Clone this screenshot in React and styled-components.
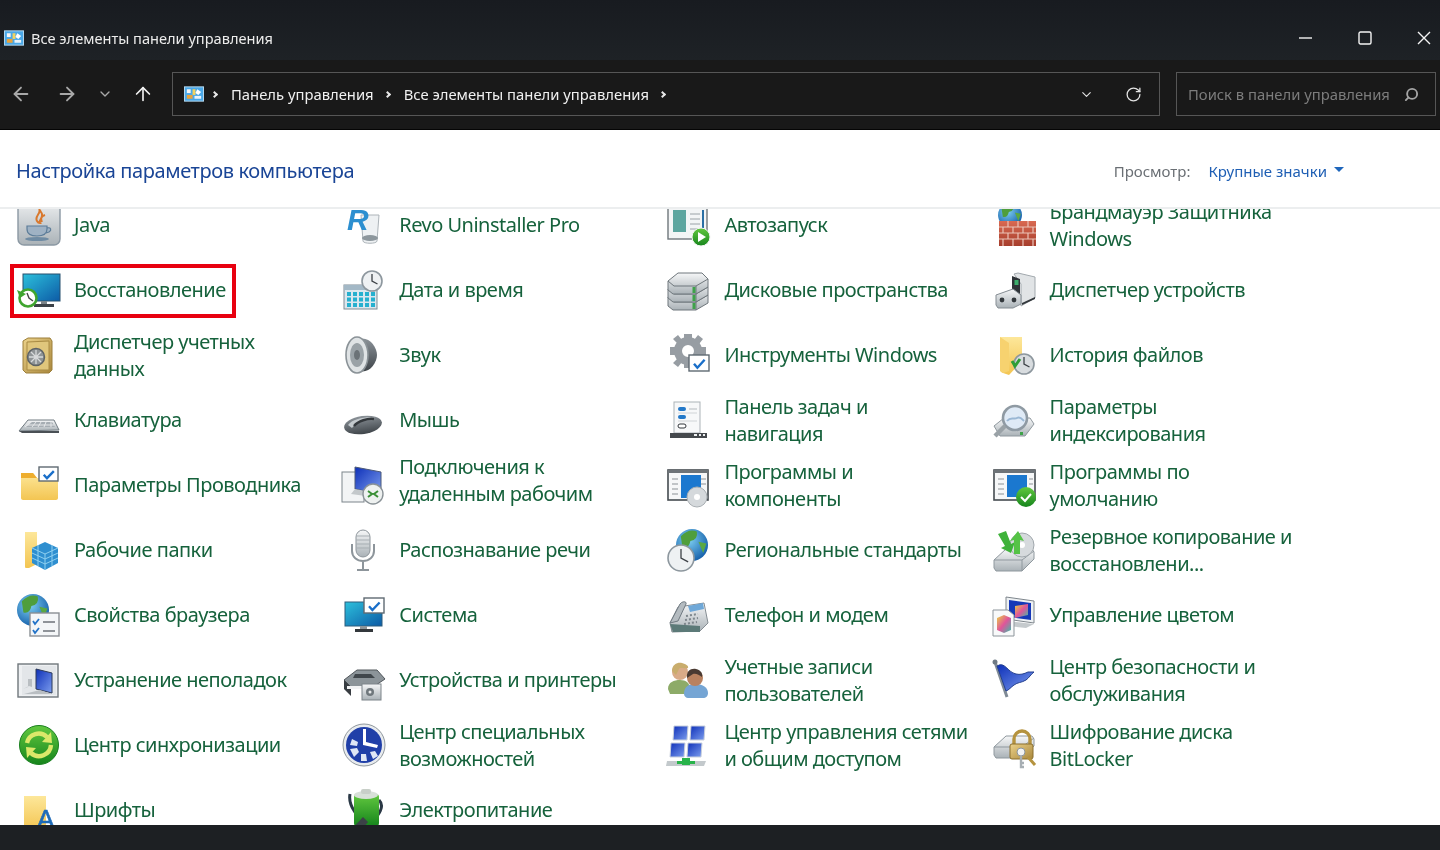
import React from "react";
import styled, { createGlobalStyle } from "styled-components";
import { ArrowLeft, ArrowRight, ArrowUp, ChevronDown, RotateCw, Search } from "lucide-react";

const GlobalStyle = createGlobalStyle`
  html, body { margin: 0; padding: 0; background: #fff; }
  body { font-family: "Noto Sans", "Open Sans", sans-serif; }
`;

// small drawing helpers shared by the big icons
const Gradients = () => (
  <HiddenSvg aria-hidden="true">
    <defs>
      <linearGradient id="gScreen" x1="0" y1="0" x2="1" y2="1"><stop offset="0" stopColor="#2cc0dc" /><stop offset="1" stopColor="#0d5ba6" /></linearGradient>
      <linearGradient id="gFolder" x1="0" y1="0" x2="0" y2="1"><stop offset="0" stopColor="#fde79a" /><stop offset="1" stopColor="#f3c552" /></linearGradient>
      <linearGradient id="gSteel" x1="0" y1="0" x2="0" y2="1"><stop offset="0" stopColor="#f6f7f8" /><stop offset="1" stopColor="#aab2b7" /></linearGradient>
      <linearGradient id="gDark" x1="0" y1="0" x2="0" y2="1"><stop offset="0" stopColor="#8b9298" /><stop offset="1" stopColor="#3f454a" /></linearGradient>
      <linearGradient id="gGreen" x1="0" y1="0" x2="0" y2="1"><stop offset="0" stopColor="#62c83f" /><stop offset="1" stopColor="#16851c" /></linearGradient>
      <radialGradient id="gGlobe" cx="0.4" cy="0.35" r="0.75"><stop offset="0" stopColor="#7fd0f2" /><stop offset="1" stopColor="#0b55a4" /></radialGradient>
      <linearGradient id="gWin" x1="0" y1="0" x2="1" y2="1"><stop offset="0" stopColor="#0d2fb8" /><stop offset="1" stopColor="#7c9dee" /></linearGradient>
      <linearGradient id="gGold" x1="0" y1="0" x2="1" y2="1"><stop offset="0" stopColor="#ecd28a" /><stop offset="1" stopColor="#a9873c" /></linearGradient>
      <linearGradient id="gBrick" x1="0" y1="0" x2="0" y2="1"><stop offset="0" stopColor="#d96a52" /><stop offset="1" stopColor="#a63d2c" /></linearGradient>
      <linearGradient id="gRainbow" x1="0" y1="0" x2="1" y2="1"><stop offset="0" stopColor="#e9d23f" /><stop offset="0.5" stopColor="#e0549a" /><stop offset="1" stopColor="#36c0a8" /></linearGradient>
    </defs>
  </HiddenSvg>
);

const CheckCard = ({ x, y, w = 20, h = 15 }) => (
  <g>
    <rect x={x} y={y} width={w} height={h} fill="#fff" stroke="#5f6a72" strokeWidth="1.4" />
    <path d={`M${x + w * 0.25} ${y + h * 0.55}l${w * 0.17} ${h * 0.25} ${w * 0.36} -${h * 0.5}`} fill="none" stroke="#1a6fc9" strokeWidth="2.4" />
  </g>
);

const Globe = ({ cx, cy, r }) => (
  <g>
    <circle cx={cx} cy={cy} r={r} fill="url(#gGlobe)" />
    <path d={`M${cx - r * 0.7} ${cy - r * 0.55}q${r * 0.5} -${r * 0.5} ${r} -${r * 0.3}q${r * 0.1} ${r * 0.5} -${r * 0.4} ${r * 0.6}q-${r * 0.1} ${r * 0.5} -${r * 0.5} ${r * 0.4}z`} fill="#4f9e3c" />
    <path d={`M${cx + r * 0.4} ${cy - r * 0.2}l${r * 0.5} ${r * 0.1}l-${r * 0.2} ${r * 0.6}z`} fill="#5aa843" />
  </g>
);

const Clock = ({ cx, cy, r, fill = "#eef1f3" }) => (
  <g>
    <circle cx={cx} cy={cy} r={r} fill={fill} stroke="#8d979e" strokeWidth="1.6" />
    <path d={`M${cx} ${cy - r * 0.7}V${cy}L${cx + r * 0.55} ${cy + r * 0.3}`} fill="none" stroke="#3d4247" strokeWidth="1.3" />
  </g>
);

const Drive = ({ y = 0 }) => (
  <g transform={`translate(0 ${y})`}>
    <path d="M4 31 16 20h26l2 3v7L32 42H6l-2-3z" fill="url(#gSteel)" stroke="#8f989e" />
    <path d="M4 31h28l12-9M32 31v11" fill="none" stroke="#8f989e" />
  </g>
);

const Java = () => (<>
  <rect x="4" y="-6" width="42" height="50" rx="6" fill="url(#gSteel)" stroke="#8b98a3" strokeWidth="1.4" />
  <path d="M25 8c3 4-5 7-2 12 1 2 3 2 3 2-2-3 5-6 1-11zM31 14c-3 1-5 3-3 7" fill="none" stroke="#d9782d" strokeWidth="2" />
  <path d="M13 25h20v3c0 5-4 7-10 7s-10-2-10-7zM33 27c4-1 5 2 2 4l-3 1" fill="#9fb2c4" stroke="#5d7d99" strokeWidth="1.2" />
  <ellipse cx="23" cy="38" rx="12" ry="2" fill="#6f8ba3" />
</>);

const Restore = () => (<>
  <rect x="9" y="8" width="37" height="27" fill="url(#gScreen)" stroke="#27506f" />
  <path d="M20 38h20v3H20z" fill="#3c4247" /><path d="M27 35h6v3h-6z" fill="#7b8489" />
  <circle cx="14" cy="32" r="8.5" fill="#fff" stroke="#3fa52f" strokeWidth="2.6" />
  <path d="M3 24l3 8 6-4z" fill="#3fa52f" /><path d="M13 27l2 5 4 3" fill="none" stroke="#444" strokeWidth="1.4" />
</>);

const Safe = () => (<>
  <path d="M9 10l5-3h22l2 3v29l-3 3H12l-3-3z" fill="url(#gGold)" stroke="#9c7f3a" />
  <path d="M13 11l22-1v29l-22 0z" fill="#e0c67c" stroke="#a98b44" />
  <circle cx="22" cy="26" r="8.5" fill="#8f9496" stroke="#5d6265" strokeWidth="1.5" />
  <path d="M22 19v14M15 26h14M17 21l10 10M27 21 17 31" stroke="#d8dadb" strokeWidth="1.3" />
</>);

const Keyboard = () => (<>
  <path d="M5 35 14 24h26l5 10z" fill="url(#gSteel)" stroke="#707a81" />
  <path d="M12 31 18 26h20l3 5z" fill="#a6adb3" />
  <path d="M17 26l-6 5M22 26l-4 5M27 26l-3 5M32 26l-2 5M37 26v5M12 29h28" stroke="#e6e8ea" />
  <path d="M5 35h40v2H8z" fill="#4a5055" />
</>);

const Explorer = () => (<>
  <path d="M7 14c0-1 1-2 2-2h10l4 5h21v20c0 1-1 2-2 2H9c-1 0-2-1-2-2z" fill="url(#gFolder)" />
  <path d="M7 12h12l4 5H7z" fill="#eeae2e" />
  <CheckCard x={25} y={6} w={19} h={14} />
</>);

const WorkFolders = () => (<>
  <path d="M11 6h12v32l-8 4h-3c-1 0-1-1-1-2z" fill="url(#gFolder)" />
  <path d="M18 22l13-6 13 6v15l-13 7-13-7z" fill="#2f8fd0" />
  <path d="M18 22l13 6 13-6M31 28v16M18 27l13 6 13-6M18 32l13 6 13-6M24 19v21M38 19v21" fill="none" stroke="#8fd0f0" />
</>);

const Browser = () => (<>
  <Globe cx={19} cy={19} r={16} />
  <rect x="16" y="22" width="29" height="23" fill="#f4f6f8" stroke="#8a8f94" strokeWidth="1.4" />
  <path d="M19 30l2 3 4-5M19 39l2 3 4-5" fill="none" stroke="#2373c8" strokeWidth="1.8" />
  <path d="M29 31h12M29 40h12" stroke="#6d7379" strokeWidth="1.6" />
</>);

const Trouble = () => (<>
  <rect x="4" y="8" width="40" height="33" fill="#eef0f2" stroke="#70777c" strokeWidth="1.4" />
  <path d="M8 10h34v29H8z" fill="#e3e6e9" />
  <path d="M22 13 38 17v20l-16-4z" fill="url(#gWin)" stroke="#2d3a58" />
  <path d="M9 33l6-3 3 1v-8h-4v8M10 38l16-4 12 4z" fill="#b9bec2" />
</>);

const Sync = () => (<>
  <circle cx="25" cy="24" r="19.5" fill="url(#gGreen)" stroke="#19801f" />
  <path d="M13 22a12 12 0 0 1 20-6" fill="none" stroke="#dbe86a" strokeWidth="4.4" />
  <path d="M37 24a12 12 0 0 1-20 8" fill="none" stroke="#dbe86a" strokeWidth="4.4" />
  <path d="M28 21 38 22 37 11zM22 27 12 26 13 37z" fill="#dbe86a" />
</>);

const Fonts = () => (<>
  <path d="M10 10h22v34H10z" fill="url(#gFolder)" />
  <text x="23" y="42" fontFamily="Liberation Sans, sans-serif" fontSize="26" fill="#1e6bb8" stroke="#1e6bb8" strokeWidth=".6">A</text>
</>);

const Revo = () => (<>
  <path d="M22 14h18l-2 26c0 3-14 3-14 0z" fill="#eef1f3" stroke="#adb4b9" />
  <ellipse cx="31" cy="37" rx="8" ry="3" fill="#8d979d" />
  <text x="8" y="29" fontFamily="Liberation Sans, sans-serif" fontSize="30" fontWeight="700" fontStyle="italic" fill="#2c8fd0">R</text>
</>);

const DateTime = () => (<>
  <rect x="5" y="19" width="33" height="24" fill="#dbe7ee" stroke="#7e8c95" />
  <path d="M5 19h33v5H5z" fill="#a3b8c6" />
  {[0, 1, 2].map(r => [0, 1, 2, 3, 4].map(c => <rect key={`${r}${c}`} x={8 + c * 6} y={26 + r * 5.5} width="4" height="4" fill="#26b0cf" />))}
  <Clock cx={33} cy={15} r={10} />
</>);

const Sound = () => (<>
  <path d="M20 8c10-3 18 8 18 16s-8 19-18 16z" fill="url(#gDark)" />
  <ellipse cx="18" cy="24" rx="11" ry="18" fill="#dfe3e5" stroke="#8a9297" strokeWidth="1.6" />
  <ellipse cx="18" cy="24" rx="7" ry="12" fill="#9aa2a7" />
  <ellipse cx="18" cy="24" rx="3" ry="5" fill="#6b7277" />
</>);

const Mouse = () => (<>
  <ellipse cx="24" cy="29" rx="19" ry="9" transform="rotate(-8 24 29)" fill="url(#gDark)" />
  <path d="M9 29c5-7 20-9 30-7-8-1-20 2-26 10z" fill="#c2c8cc" />
  <path d="M15 30c4-5 14-8 20-7" fill="none" stroke="#33383c" strokeWidth="2.4" />
</>);

const Remote = () => (<>
  <rect x="3" y="11" width="22" height="30" fill="#f2f4f5" stroke="#7d858b" />
  <path d="M16 6l26 5v22l-26-5z" fill="url(#gWin)" stroke="#4c5a78" />
  <path d="M16 28l26 5-8 3-22-3z" fill="#c3c8cb" />
  <circle cx="34" cy="33" r="10" fill="#eef1f0" stroke="#8a9297" strokeWidth="1.4" />
  <path d="M29 30l4 3-4 3M39 30l-4 3 4 3" fill="none" stroke="#3a8f36" strokeWidth="2" />
</>);

const Mic = () => (<>
  <rect x="17" y="4" width="14" height="27" rx="7" fill="url(#gSteel)" stroke="#8d959b" />
  <path d="M17 10h14M17 14h14M17 18h14M17 22h14" stroke="#a7aeb3" />
  <path d="M13 18v7c0 6 5 10 11 10s11-4 11-10v-7M24 35v9M18 44h12" fill="none" stroke="#8d959b" strokeWidth="2" />
</>);

const System = () => (<>
  <rect x="6" y="11" width="37" height="24" fill="url(#gScreen)" stroke="#2d5d7c" />
  <path d="M21 35h7v3h-7z" fill="#8c9499" /><path d="M16 38h18v3H16z" fill="#33383c" />
  <CheckCard x={25} y={7} w={20} h={15} />
</>);

const Printer = () => (<>
  <path d="M5 24 18 14h20l8 9-12 8H12z" fill="#8c9499" stroke="#50565b" />
  <path d="M16 18h16l4 4H14z" fill="#41474c" />
  <path d="M5 24v9l7 7V31z" fill="#383d42" /><path d="M8 30h18v3H8z" fill="#f2f3f4" />
  <rect x="23" y="28" width="19" height="16" fill="url(#gSteel)" stroke="#7c8489" />
  <circle cx="31" cy="36" r="4" fill="#6f777c" /><circle cx="31" cy="36" r="1.5" fill="#e7e9ea" />
</>);

const Access = () => (<>
  <circle cx="25" cy="24" r="21" fill="#e8ebee" stroke="#8f979d" />
  <circle cx="25" cy="24" r="18" fill="#203fa8" />
  <path d="M24 8h3v13l12 3-1 3-14-3z" fill="#fff" />
  <path d="M13 18l6 3-1 4-7-1zM11 28l7-1 2 4-5 5zM22 33l5 0 1 7-6 0zM31 31l5-1 3 5-5 3z" fill="#dfe6f5" />
</>);

const Power = () => (<>
  <path d="M11 8c-2 10 4 16 6 20M40 14c6 6 1 14-10 26" fill="none" stroke="#2a3845" strokeWidth="3" />
  <rect x="15" y="8" width="25" height="32" rx="3" fill="url(#gGreen)" />
  <ellipse cx="27" cy="9" rx="12" ry="4" fill="#d8e0d8" />
  <rect x="22" y="3" width="10" height="5" rx="2" fill="#c8cfc8" />
  <path d="M12 44 24 31l5 5-8 10z" fill="#3c4247" /><path d="M8 44l5-4 5 5-3 3z" fill="#d9b64a" />
</>);

const Autostart = () => (<>
  <rect x="4" y="4" width="39" height="34" fill="#f3f5f6" stroke="#6f777c" strokeWidth="1.4" />
  <path d="M9 9h13v22H9z" fill="#2a8a82" opacity=".75" />
  <path d="M26 13h10M26 18h10M26 23h10M26 28h10" stroke="#9aa2a7" />
  <path d="M38 9h2v20h-2z" fill="#2a6fa5" />
  <circle cx="37" cy="36" r="9" fill="url(#gGreen)" stroke="#f2f5f2" />
  <path d="M34 31l8 5-8 5z" fill="#fff" />
</>);

const Disk = ({ y }) => (
  <g transform={`translate(0 ${y})`}>
    <path d="M4 13 14 5h24l6 6v8L32 26H9l-5-4z" fill="url(#gSteel)" stroke="#6f777c" />
    <path d="M4 13l6 5h22l12-7M32 18v8" fill="none" stroke="#6f777c" />
    <rect x="28.5" y="19" width="3" height="6" fill="#3fa24a" />
  </g>
);

const Storage = () => (<>
  <Disk y={18} /><Disk y={10} /><Disk y={2} />
</>);

const Tools = () => (<>
  <circle cx="24" cy="20" r="10" fill="none" stroke="#979da3" strokeWidth="8" />
  <path d="M20 3h8v6h-8zM20 31h8v6h-8zM6 16h6v8H6zM36 16h6v8h-6zM9 8l5-4 4 5-4 4zM34 4l5 4-4 5-5-4zM9 32l5 4 4-5-4-4z" fill="#979da3" />
  <CheckCard x={25} y={24} w={20} h={16} />
</>);

const Taskbar = () => (<>
  <rect x="10" y="6" width="26" height="31" fill="#f7f8f9" stroke="#acb3b8" />
  <rect x="14" y="11" width="8" height="4" rx="2" fill="#2379c9" /><path d="M25 13h8" stroke="#b3b9bd" />
  <rect x="14" y="19" width="8" height="4" rx="2" fill="#2379c9" /><path d="M14 17h19M14 25h19" stroke="#d0d4d7" />
  <rect x="14" y="28" width="8" height="4" rx="2" fill="#fff" stroke="#33383c" />
  <rect x="6" y="37" width="37" height="5" fill="#45494d" />
  <path d="M30 39h3M35 39h2M39 39h2" stroke="#eef0f1" strokeWidth="2" />
</>);

const Programs = () => (<>
  <rect x="4" y="9" width="40" height="30" fill="#f6f7f8" stroke="#454b50" strokeWidth="1.6" />
  <path d="M4 9h40v3H4z" fill="#6d7378" />
  <path d="M17 14h20v14l-9 9H17z" fill="#1b78cf" />
  <path d="M8 18h6M8 23h6M8 28h6M8 33h6M37 18h5M37 23h5" stroke="#8b9196" />
  <circle cx="33" cy="36" r="10" fill="#d5d9dc" stroke="#a9afb3" />
  <circle cx="33" cy="36" r="3" fill="#fff" />
</>);

const Region = () => (<>
  <Globe cx={28} cy={19} r={16} />
  <Clock cx={17} cy={32} r={13} />
</>);

const Phone = () => (<>
  <path d="M6 32 14 16l26-4 4 20-8 8-28 1z" fill="url(#gSteel)" stroke="#858d93" />
  <path d="M6 32 16 13c2-3 7-3 6 0l-8 17z" fill="#b4bbc0" stroke="#707a81" />
  <path d="M24 15l15-3 1 6-14 3z" fill="#6fa8d8" />
  <path d="M22 25l12-2M21 29l13-2M20 33l13-2" stroke="#7f878d" strokeWidth="2" strokeDasharray="2 2" />
  <path d="M6 33l30 2v6H9z" fill="#5c7a78" />
</>);

const Users = () => (<>
  <path d="M4 33c0-7 6-9 12-9s10 3 10 9l-4 5H6z" fill="#8dab68" />
  <circle cx="16" cy="16" r="8" fill="#d9ab88" /><path d="M8 15c0-7 6-9 10-8s7 3 6 5c-5 1-8-1-9 1l-3 6z" fill="#c9ad6d" />
  <path d="M20 38c0-7 4-10 11-10s13 3 13 9c0 3-2 5-5 5H24c-2 0-4-2-4-4z" fill="#75a5d4" />
  <circle cx="31" cy="22" r="8" fill="#b9815f" /><path d="M23 22c-1-7 4-10 9-9s7 5 6 8c-3-2-6-4-9-3z" fill="#4a3a32" />
</>);

const Network = () => (<>
  {[[10, 5], [27, 5], [7, 22], [24, 22]].map(([x, y]) => (
    <g key={`${x}${y}`}>
      <path d={`M${x} ${y}h14l-1 14H${x - 1}z`} fill="url(#gWin)" stroke="#c9d0dc" />
    </g>
  ))}
  <path d="M3 40h39l-2 5H2z" fill="#c3c9cc" />
  <path d="M13 40h18v3H13z" fill="#28b34a" /><path d="M18 37h8v7h-8z" fill="#28b34a" />
</>);

const Firewall = () => (<>
  <Globe cx={20} cy={14} r={12} />
  <rect x="9" y="20" width="37" height="25" fill="url(#gBrick)" />
  <path d="M9 26h37M9 32h37M9 38h37M18 20v6M28 20v6M38 20v6M13 26v6M23 26v6M33 26v6M43 26v6M18 32v6M28 32v6M38 32v6M13 38v7M23 38v7M33 38v7M43 38v7" stroke="#eac2b6" strokeWidth="1.2" />
</>);

const Devices = () => (<>
  <path d="M24 8l4-1 17 4v21l-14 8V18z" fill="#e1e4e6" stroke="#a2a9ae" />
  <path d="M22 10l8 3v16l-8-2z" fill="#2f3438" /><rect x="24.5" y="14" width="4" height="5" fill="#3cae6c" />
  <path d="M6 29l17-6 8 6v9l-8 4H8l-2-3z" fill="url(#gSteel)" stroke="#858d93" />
  <circle cx="12" cy="34" r="2.4" fill="#33383c" /><circle cx="24" cy="34" r="2.4" fill="#33383c" />
  <path d="M32 37l13-6v2l-13 6z" fill="#33383c" />
</>);

const History = () => (<>
  <path d="M10 6h22v24l-13 14-6-2c-2-1-3-2-3-3z" fill="url(#gFolder)" />
  <path d="M10 6l9 6v28l-6 2c-2-1-3-2-3-3z" fill="#f7d26f" />
  <Clock cx={34} cy={33} r={10} fill="#d8dcdf" />
  <path d="M22 30l3 5 5-7" fill="none" stroke="#2f9e37" strokeWidth="3" />
</>);

const Indexing = () => (<>
  <path d="M4 30 14 22h26l4 6-9 12H10z" fill="url(#gSteel)" stroke="#8f989e" />
  <path d="M30 36h3v3h-3z" fill="#3fa24a" />
  <circle cx="25" cy="22" r="12" fill="#dfeaf6" stroke="#8f9aa3" strokeWidth="2.6" />
  <path d="M15 30 5 40" stroke="#9aa2a7" strokeWidth="4.5" />
  <path d="M17 25c4-5 7-1 10-3 3-2 5 1 7 3" fill="none" stroke="#9ab7d4" strokeWidth="2" />
</>);

const Defaults = () => (<>
  <rect x="4" y="9" width="41" height="30" fill="#f6f7f8" stroke="#454b50" strokeWidth="1.6" />
  <path d="M4 9h41v3H4z" fill="#6d7378" />
  <rect x="17" y="14" width="20" height="22" fill="#1b78cf" />
  <path d="M8 18h6M8 23h6M8 28h6M8 33h6M39 18h4M39 23h4" stroke="#8b9196" />
  <circle cx="36" cy="36" r="10" fill="url(#gGreen)" />
  <path d="M31 36l4 4 6-7" fill="none" stroke="#fff" strokeWidth="2" />
</>);

const Backup = () => (<>
  <Drive y={3} />
  <circle cx="32" cy="19" r="12" fill="#d6dadd" stroke="#a1a8ad" /><circle cx="32" cy="19" r="3" fill="#fff" />
  <path d="M8 8l8-3 5 13 4-2-4 11-10-5 4-2z" fill="#3fb23a" />
  <path d="M24 28V14l-4 1 8-10 6 10-4-1v14z" fill="#55c346" />
</>);

const Color = () => (<>
  <path d="M16 6l28 4v22l-28-4z" fill="#eef1f3" stroke="#7e868c" />
  <path d="M19 9l22 3v17l-22-3z" fill="#1638b8" />
  <path d="M25 15l13-2v11l-13 3z" fill="url(#gRainbow)" />
  <path d="M18 30l26 3-8 4-18-2z" fill="#c5cacd" />
  <path d="M3 19h15l6 5v21H3z" fill="#f8f9fa" stroke="#8d959b" />
  <path d="M7 27l7-3 7 3v12l-7 3-7-3z" fill="url(#gRainbow)" />
</>);

const FlagIcon = () => (<>
  <path d="M5 6l12 35" stroke="#7f8a95" strokeWidth="3" />
  <circle cx="5" cy="6" r="2.5" fill="#6f7a85" />
  <path d="M7 10c8-5 10 6 19 8 4 1 8 0 12-2l6 0c-3 2-5 6-8 8-5 3-8 2-12 5-3 2-5 5-8 6z" fill="url(#gWin)" stroke="#24408f" />
</>);

const Bitlocker = () => (<>
  <Drive y={-5} />
  <path d="M24 24v-6a8 8 0 0 1 16 0v6" fill="none" stroke="#b5933f" strokeWidth="3.4" />
  <rect x="20" y="23" width="23" height="15" rx="2" fill="url(#gGold)" stroke="#8a6f2f" />
  <circle cx="31" cy="31" r="4" fill="#f2f3f3" stroke="#8d959b" />
  <path d="M31 35v11h3M31 42h3" fill="none" stroke="#a7aeb3" strokeWidth="2.4" />
  <path d="M38 36l7 8" stroke="#b5933f" strokeWidth="3" />
</>);

const PanelGlyph = () => (
  <TinyIcon viewBox="0 0 21 16">
    <rect x="0.5" y="0.5" width="20" height="15" fill="#4aa8e8" stroke="#b9dcf2" />
    <path d="M3 3h4v4H3z" fill="#f5f5f5" /><path d="M9 3h3v6H9z" fill="#f4d35e" />
    <path d="M14 3l4 3-3 3-3-2z" fill="#fff" /><path d="M3 9h6v4H3z" fill="#e8a33c" /><path d="M11 10h7v3h-7z" fill="#e9f3fa" />
  </TinyIcon>
);

const items = [
  ["Java", Java], ["Revo Uninstaller Pro", Revo], ["Автозапуск", Autostart], ["Брандмауэр Защитника\nWindows", Firewall],
  ["Восстановление", Restore, "marked"], ["Дата и время", DateTime], ["Дисковые пространства", Storage], ["Диспетчер устройств", Devices],
  ["Диспетчер учетных\nданных", Safe], ["Звук", Sound], ["Инструменты Windows", Tools], ["История файлов", History],
  ["Клавиатура", Keyboard], ["Мышь", Mouse], ["Панель задач и\nнавигация", Taskbar], ["Параметры\nиндексирования", Indexing],
  ["Параметры Проводника", Explorer], ["Подключения к\nудаленным рабочим", Remote, "raised"], ["Программы и\nкомпоненты", Programs], ["Программы по\nумолчанию", Defaults],
  ["Рабочие папки", WorkFolders], ["Распознавание речи", Mic], ["Региональные стандарты", Region], ["Резервное копирование и\nвосстановлени...", Backup],
  ["Свойства браузера", Browser], ["Система", System], ["Телефон и модем", Phone], ["Управление цветом", Color],
  ["Устранение неполадок", Trouble], ["Устройства и принтеры", Printer], ["Учетные записи\nпользователей", Users], ["Центр безопасности и\nобслуживания", FlagIcon],
  ["Центр синхронизации", Sync], ["Центр специальных\nвозможностей", Access], ["Центр управления сетями\nи общим доступом", Network], ["Шифрование диска\nBitLocker", Bitlocker],
  ["Шрифты", Fonts], ["Электропитание", Power],
];

const App = () => {
  return (
    <Window>
      <GlobalStyle />
      <Gradients />
      <TitleBar>
        <TitleLeft>
          <PanelGlyph />
          <WindowTitle>Все элементы панели управления</WindowTitle>
        </TitleLeft>
        <WindowButtons>
          <WinGlyph viewBox="0 0 14 14"><path d="M0 7h13" /></WinGlyph>
          <WinGlyph viewBox="0 0 14 14"><rect x="1" y="1" width="12" height="12" rx="1.5" /></WinGlyph>
          <WinGlyph viewBox="0 0 14 14"><path d="M1 1l12 12M13 1 1 13" /></WinGlyph>
        </WindowButtons>
      </TitleBar>
      <NavBar>
        <NavButtons>
          <NavButton $w={42} $dim><ArrowLeft size={22} strokeWidth={2} /></NavButton>
          <NavButton $w={50} $dim><ArrowRight size={22} strokeWidth={2} /></NavButton>
          <NavButton $w={26} $dim><ChevronDown size={16} strokeWidth={2} /></NavButton>
          <NavButton $w={50}><ArrowUp size={22} strokeWidth={1.8} /></NavButton>
        </NavButtons>
        <AddressBox>
          <PanelGlyph />
          <Sep />
          <Crumb>Панель управления</Crumb>
          <Sep />
          <Crumb>Все элементы панели управления</Crumb>
          <Sep />
          <AddressEnd>
            <ChevronDown size={15} strokeWidth={1.8} />
            <RotateCw size={17} strokeWidth={1.8} />
          </AddressEnd>
        </AddressBox>
        <SearchBox>
          <SearchHint>Поиск в панели управления</SearchHint>
          <SearchIcon size={15} strokeWidth={3} />
        </SearchBox>
      </NavBar>
      <PanelHeader>
        <Heading>Настройка параметров компьютера</Heading>
        <ViewMenu>
          <ViewLabel>Просмотр:</ViewLabel>
          <ViewValue>Крупные значки</ViewValue>
          <Caret />
        </ViewMenu>
      </PanelHeader>
      <ListArea>
        <ItemGrid>
          {items.map(([label, Icon, flag]) => (
            <Item key={label}>
              <IconFrame viewBox="0 0 48 48"><Icon /></IconFrame>
              <ItemLabel $raised={flag === "raised"}>{label}</ItemLabel>
              {flag === "marked" && <RedMark />}
            </Item>
          ))}
        </ItemGrid>
      </ListArea>
      <BottomBar />
    </Window>
  );
};

const HiddenSvg = styled.svg`
  position: absolute;
  width: 0;
  height: 0;
`;

const Window = styled.div`
  width: 1440px;
  height: 850px;
  display: flex;
  flex-direction: column;
  overflow: hidden;
  background: #fff;
  filter: blur(0.35px);
`;

const TitleBar = styled.div`
  height: 60px;
  flex: none;
  display: flex;
  align-items: flex-end;
  justify-content: space-between;
  background: linear-gradient(#181b20, #1e2226);
`;

const TitleLeft = styled.div`
  display: flex;
  align-items: center;
  gap: 7px;
  height: 44px;
  padding-left: 4px;
`;

const TinyIcon = styled.svg`
  width: 20px;
  height: 16px;
  flex: none;
`;

const WindowTitle = styled.span`
  color: #ececec;
  font-size: 14.6px;
`;

const WindowButtons = styled.div`
  display: flex;
  height: 44px;
  align-items: center;
  gap: 45px;
  padding-right: 9px;
`;

const WinGlyph = styled.svg`
  width: 14px;
  height: 14px;
  fill: none;
  stroke: #f4f4f4;
  stroke-width: 1.4;
`;

const NavBar = styled.div`
  height: 70px;
  flex: none;
  display: flex;
  align-items: center;
  background: #191919;
  border-bottom: 1px solid #050505;
  box-sizing: border-box;
  padding-bottom: 1px;
`;

const NavButtons = styled.div`
  width: 172px;
  flex: none;
  display: flex;
  align-items: center;
`;

const NavButton = styled.div`
  width: ${p => p.$w}px;
  display: flex;
  justify-content: center;
  color: ${p => (p.$dim ? "#a8a8a8" : "#f2f2f2")};
`;

const AddressBox = styled.div`
  width: 988px;
  height: 44px;
  flex: none;
  box-sizing: border-box;
  border: 1.5px solid #565656;
  display: flex;
  align-items: center;
  gap: 8px;
  padding: 0 17px 0 11px;
`;

const Sep = styled.span`
  width: 5px;
  height: 5px;
  flex: none;
  margin: 0 3px 0 0;
  border-top: 2px solid #e6e6e6;
  border-right: 2px solid #e6e6e6;
  box-sizing: border-box;
  transform: rotate(45deg);
`;

const Crumb = styled.span`
  color: #f0f0f0;
  font-size: 14.8px;
  padding: 0 3px 1px;
`;

const AddressEnd = styled.div`
  margin-left: auto;
  display: flex;
  align-items: center;
  gap: 31px;
  color: #e4e4e4;
`;

const SearchBox = styled.div`
  width: 260px;
  height: 44px;
  flex: none;
  margin-left: 16px;
  box-sizing: border-box;
  border: 1.5px solid #565656;
  display: flex;
  align-items: center;
  justify-content: space-between;
  padding: 0 16px 0 11px;
`;

const SearchHint = styled.span`
  color: #7c7c7c;
  font-size: 14.8px;
`;

const SearchIcon = styled(Search)`
  color: #a5a5a5;
  transform: scaleX(-1);
`;

const PanelHeader = styled.div`
  height: 79px;
  flex: none;
  box-sizing: border-box;
  border-bottom: 2px solid #eceeef;
  display: flex;
  align-items: center;
  justify-content: space-between;
  padding: 4px 96px 0 16px;
`;

const Heading = styled.h1`
  margin: 0;
  font-size: 20px;
  font-weight: 400;
  letter-spacing: -0.39px;
  color: #1a4596;
`;

const ViewMenu = styled.div`
  display: flex;
  align-items: center;
`;

const ViewLabel = styled.span`
  color: #6a6f74;
  font-size: 15px;
  margin-right: 18px;
`;

const ViewValue = styled.span`
  color: #1f5fb4;
  font-size: 15px;
  margin-right: 7px;
`;

const Caret = styled.span`
  width: 0;
  height: 0;
  margin-bottom: 3px;
  border-left: 5px solid transparent;
  border-right: 5px solid transparent;
  border-top: 5px solid #1f66bb;
`;

const ListArea = styled.div`
  flex: 1;
  min-height: 0;
  overflow: hidden;
`;

const ItemGrid = styled.div`
  margin-top: -17px;
  display: grid;
  grid-template-columns: repeat(4, 325.2px);
  grid-auto-rows: 65px;
`;

const Item = styled.div`
  position: relative;
  display: flex;
  align-items: center;
  gap: 12px;
  padding-left: 14px;
`;

const IconFrame = styled.svg`
  width: 48px;
  height: 48px;
  flex: none;
  overflow: visible;
`;

const ItemLabel = styled.span`
  color: #16623c;
  font-size: 20px;
  line-height: 27px;
  letter-spacing: -0.5px;
  white-space: pre;
  margin-bottom: ${p => (p.$raised ? "10px" : "0")};
`;

const RedMark = styled.span`
  position: absolute;
  left: 10px;
  top: 7px;
  width: 226px;
  height: 54px;
  box-sizing: border-box;
  border: 4px solid #e8000f;
`;

const BottomBar = styled.div`
  height: 25px;
  flex: none;
  background: #1d2023;
`;

export default App;
